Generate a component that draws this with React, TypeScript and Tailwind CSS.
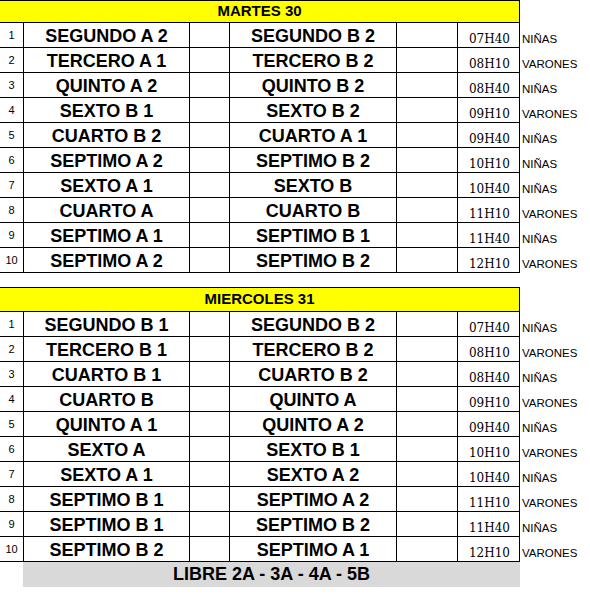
import React from "react";

type Match = [string, string, string, string];

const martes: Match[] = [
	["SEGUNDO A 2", "SEGUNDO B 2", "07H40", "NIÑAS"],
	["TERCERO A 1", "TERCERO B 2", "08H10", "VARONES"],
	["QUINTO A 2", "QUINTO B 2", "08H40", "NIÑAS"],
	["SEXTO B 1", "SEXTO B 2", "09H10", "VARONES"],
	["CUARTO B 2", "CUARTO A 1", "09H40", "NIÑAS"],
	["SEPTIMO A 2", "SEPTIMO B 2", "10H10", "NIÑAS"],
	["SEXTO A 1", "SEXTO B", "10H40", "NIÑAS"],
	["CUARTO A", "CUARTO B", "11H10", "VARONES"],
	["SEPTIMO A 1", "SEPTIMO B 1", "11H40", "NIÑAS"],
	["SEPTIMO A 2", "SEPTIMO B 2", "12H10", "VARONES"],
];

const miercoles: Match[] = [
	["SEGUNDO B 1", "SEGUNDO B 2", "07H40", "NIÑAS"],
	["TERCERO B 1", "TERCERO B 2", "08H10", "VARONES"],
	["CUARTO B 1", "CUARTO B 2", "08H40", "NIÑAS"],
	["CUARTO B", "QUINTO A", "09H10", "VARONES"],
	["QUINTO A 1", "QUINTO A 2", "09H40", "NIÑAS"],
	["SEXTO A", "SEXTO B 1", "10H10", "VARONES"],
	["SEXTO A 1", "SEXTO A 2", "10H40", "NIÑAS"],
	["SEPTIMO B 1", "SEPTIMO A 2", "11H10", "VARONES"],
	["SEPTIMO B 1", "SEPTIMO B 2", "11H40", "NIÑAS"],
	["SEPTIMO B 2", "SEPTIMO A 1", "12H10", "VARONES"],
];

const team =
	"flex items-end justify-center border-r border-black pb-px text-[18px] font-bold leading-[20px] text-black";

function Row({ n, m }: { n: number; m: Match }) {
	return (
		<div className="flex h-[25px]">
			<div className="flex w-[520px] border-b border-black">
				<div className="flex w-[24px] items-end justify-center border-r border-black pb-[5px] text-[11px] leading-[13px]">
					{n}
				</div>
				<div className={`${team} w-[166px]`}>{m[0]}</div>
				<div className="w-[40px] border-r border-black" />
				<div className={`${team} w-[167px]`}>{m[1]}</div>
				<div className="w-[61px] border-r border-black" />
				<div className="flex w-[62px] items-end justify-end border-r border-black pb-px pr-[9px] font-['DejaVu_Serif',serif] text-[12px] leading-[14px]">
					{m[2]}
				</div>
			</div>
			<div className="flex items-end pb-[2px] pl-[2px] text-[11.5px] leading-[13px]">{m[3]}</div>
		</div>
	);
}

function Day({ title, rows, tall }: { title: string; rows: Match[]; tall?: boolean }) {
	return (
		<div>
			<div
				className={`flex w-[520px] items-center justify-center border-y border-r border-black bg-[#ffff00] text-[15px] font-bold ${
					tall ? "h-[25px]" : "h-[23px]"
				}`}
			>
				{title}
			</div>
			{rows.map((m, i) => (
				<Row key={i} n={i + 1} m={m} />
			))}
		</div>
	);
}

export default function App() {
	return (
		<div className="h-[595px] w-[590px] bg-white font-['Liberation_Sans',Arial,sans-serif] text-black">
			<div className="flex flex-col">
				<Day title="MARTES 30" rows={martes} />
				<div className="h-[14px]" />
				<Day title="MIERCOLES 31" rows={miercoles} tall />
				<div className="ml-[23px] flex h-[25px] w-[497px] items-center justify-center bg-[#d9d9d9] text-[18px] font-bold">
					LIBRE 2A - 3A - 4A - 5B
				</div>
			</div>
		</div>
	);
}
